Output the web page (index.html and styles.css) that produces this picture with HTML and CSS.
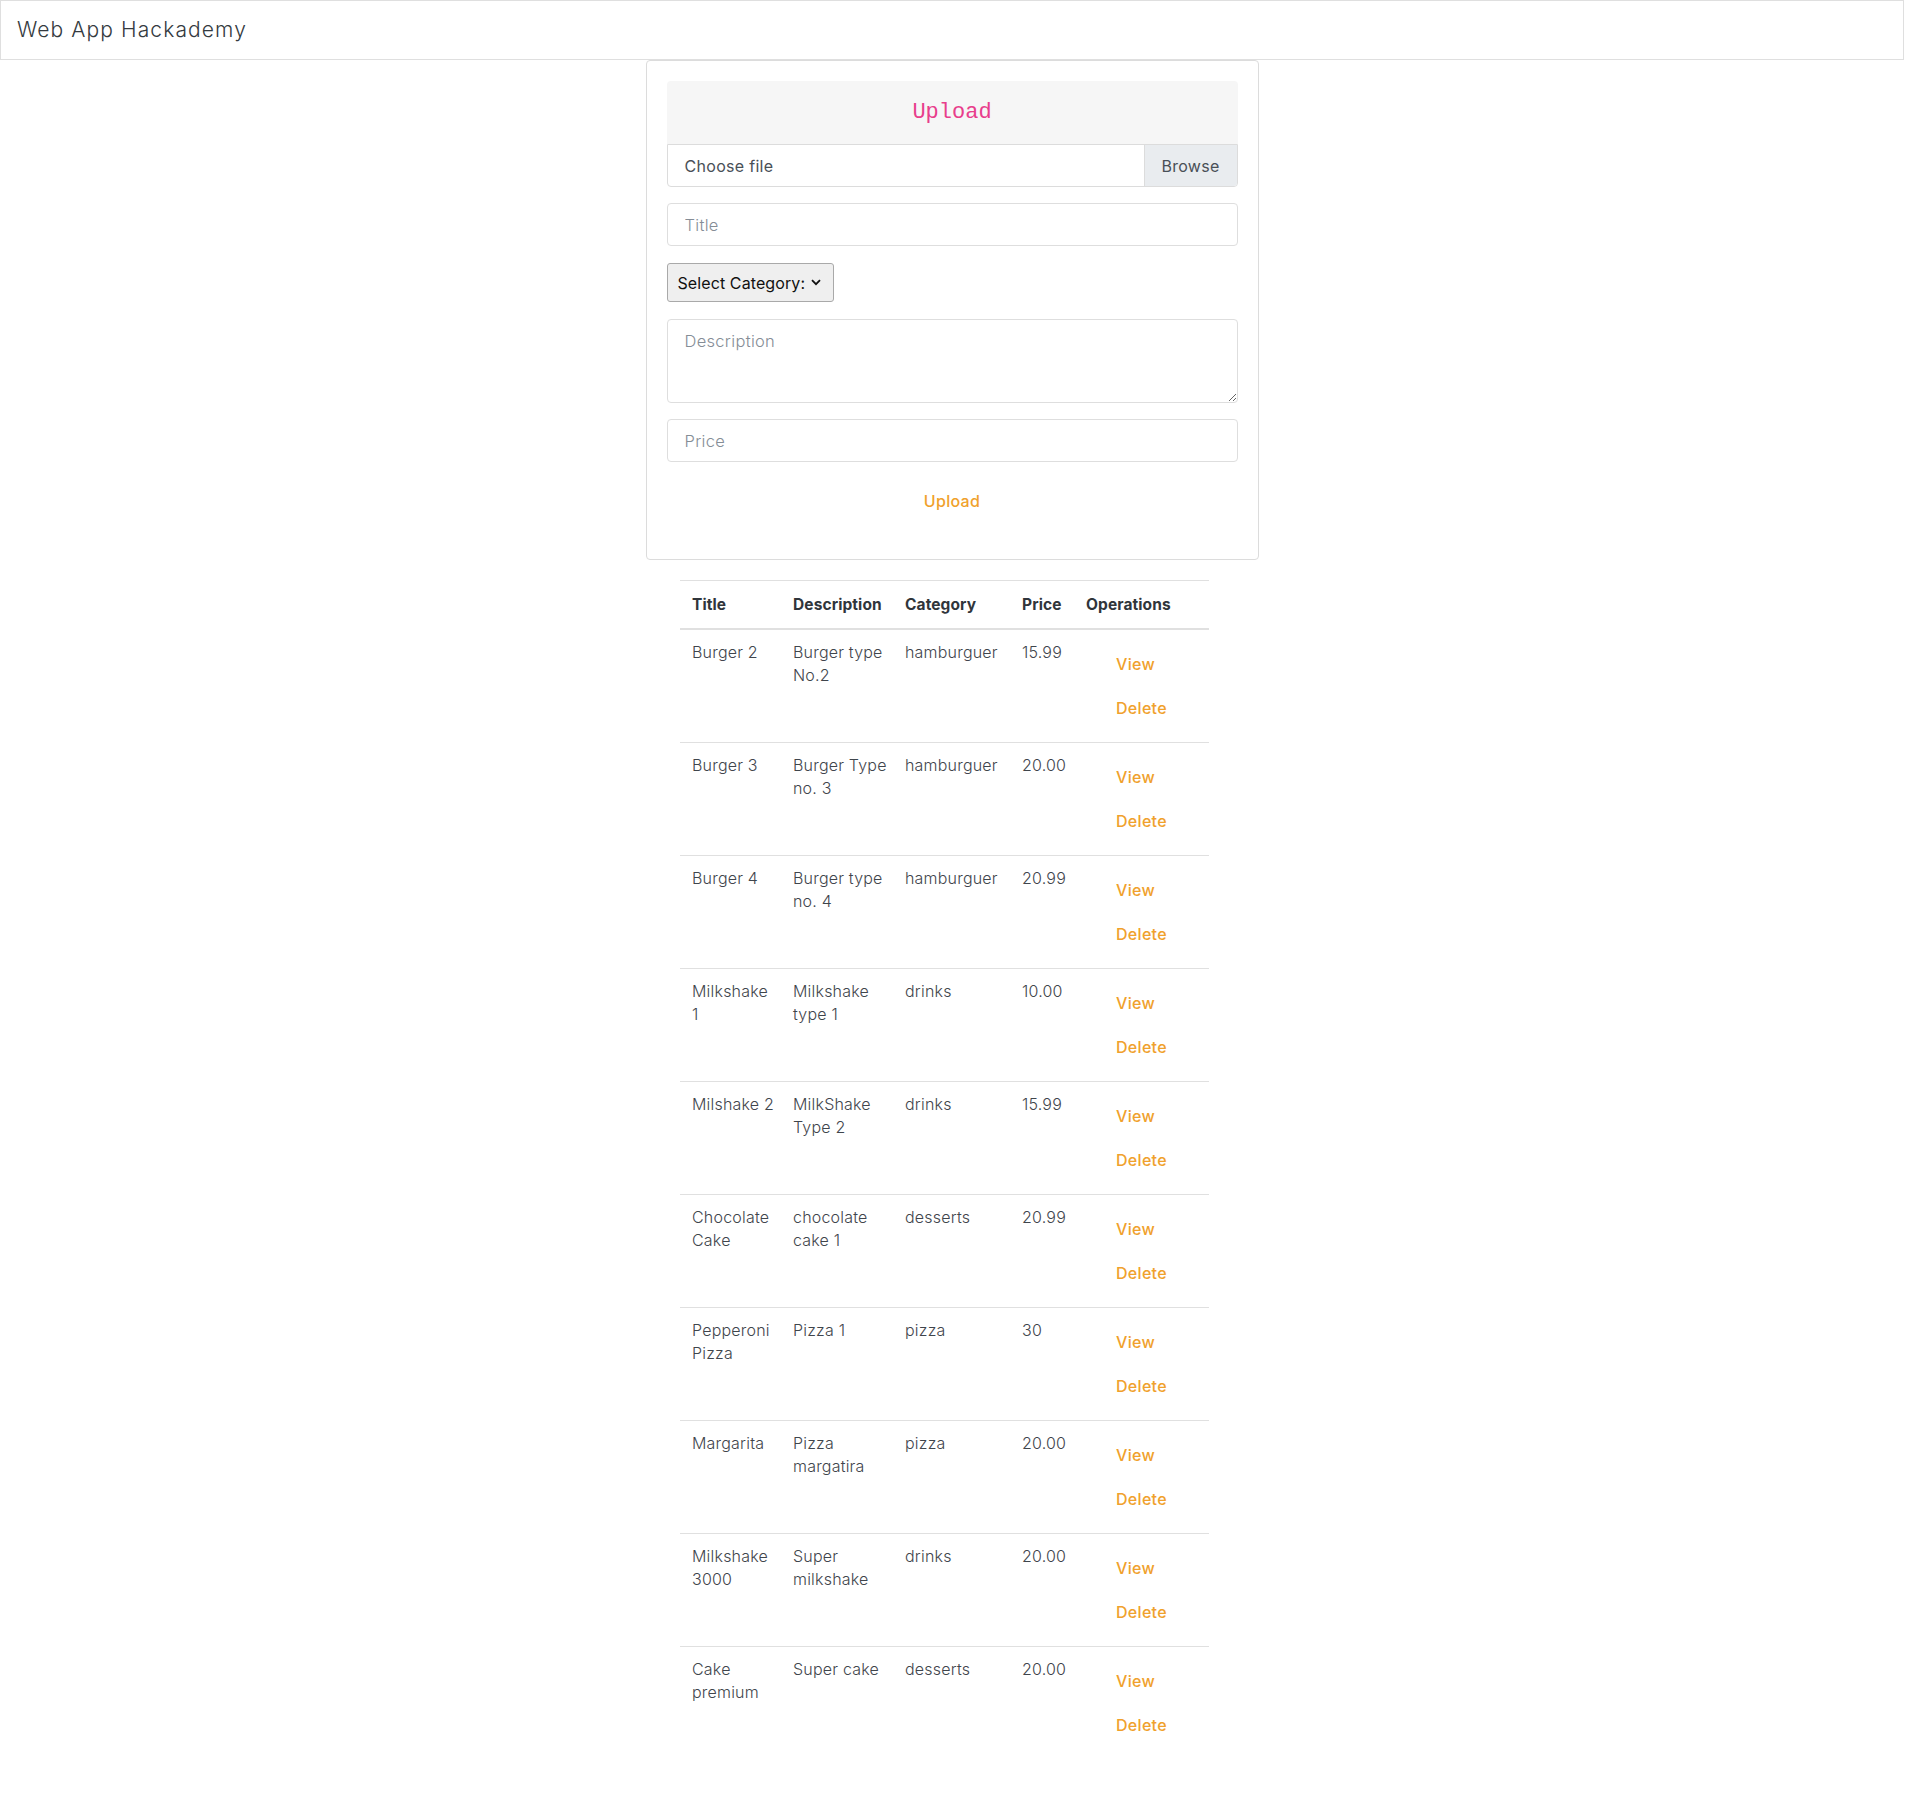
FILE: index.html
```html
<!DOCTYPE html>
<html lang="en">
<head>
<meta charset="utf-8">
<title>Web App Hackademy</title>
<link rel="stylesheet" href="styles.css">
</head>
<body>
<div class="page">
  <nav class="navbar"><span class="brand">Web App Hackademy</span></nav>
  <main class="main">
    <form class="card">
      <div class="card-head"><code class="head-title">Upload</code></div>
      <label class="file">
        <span class="file-label">Choose file</span>
        <span class="file-btn">Browse</span>
      </label>
      <input class="field" type="text" placeholder="Title">
      <div class="select-wrap">
        <select class="select"><option>Select Category:</option></select>
        <svg class="chev" width="10" height="7" viewBox="0 0 10 7"><path d="M1 1.2 L5 5.2 L9 1.2" fill="none" stroke="#111" stroke-width="1.8"/></svg>
      </div>
      <textarea class="field area" placeholder="Description"></textarea>
      <input class="field" type="text" placeholder="Price">
      <button class="link-btn" type="button">Upload</button>
    </form>

    <table class="items">
      <colgroup>
        <col class="c-title"><col class="c-desc"><col class="c-cat"><col class="c-price"><col class="c-ops">
      </colgroup>
      <thead>
        <tr><th>Title</th><th>Description</th><th>Category</th><th>Price</th><th>Operations</th></tr>
      </thead>
      <tbody>
        <tr><td>Burger 2</td><td><span class="nw">Burger type</span> No.2</td><td>hamburguer</td><td>15.99</td><td><a class="op" href="#">View</a><a class="op" href="#">Delete</a></td></tr>
        <tr><td>Burger 3</td><td><span class="nw">Burger Type</span> <span class="nw">no. 3</span></td><td>hamburguer</td><td>20.00</td><td><a class="op" href="#">View</a><a class="op" href="#">Delete</a></td></tr>
        <tr><td>Burger 4</td><td><span class="nw">Burger type</span> <span class="nw">no. 4</span></td><td>hamburguer</td><td>20.99</td><td><a class="op" href="#">View</a><a class="op" href="#">Delete</a></td></tr>
        <tr><td>Milkshake 1</td><td>Milkshake <span class="nw">type 1</span></td><td>drinks</td><td>10.00</td><td><a class="op" href="#">View</a><a class="op" href="#">Delete</a></td></tr>
        <tr><td><span class="nw">Milshake 2</span></td><td>MilkShake <span class="nw">Type 2</span></td><td>drinks</td><td>15.99</td><td><a class="op" href="#">View</a><a class="op" href="#">Delete</a></td></tr>
        <tr><td>Chocolate Cake</td><td>chocolate <span class="nw">cake 1</span></td><td>desserts</td><td>20.99</td><td><a class="op" href="#">View</a><a class="op" href="#">Delete</a></td></tr>
        <tr><td>Pepperoni Pizza</td><td><span class="nw">Pizza 1</span></td><td>pizza</td><td>30</td><td><a class="op" href="#">View</a><a class="op" href="#">Delete</a></td></tr>
        <tr><td>Margarita</td><td>Pizza margatira</td><td>pizza</td><td>20.00</td><td><a class="op" href="#">View</a><a class="op" href="#">Delete</a></td></tr>
        <tr><td>Milkshake 3000</td><td>Super milkshake</td><td>drinks</td><td>20.00</td><td><a class="op" href="#">View</a><a class="op" href="#">Delete</a></td></tr>
        <tr><td>Cake premium</td><td><span class="nw">Super cake</span></td><td>desserts</td><td>20.00</td><td><a class="op" href="#">View</a><a class="op" href="#">Delete</a></td></tr>
      </tbody>
    </table>
  </main>
</div>
</body>
</html>
```

FILE: styles.css
```css
* { box-sizing: border-box; }

html, body {
  margin: 0;
  padding: 0;
  background: #fff;
}

body {
  font-family: "Inter", "DejaVu Sans", sans-serif;
  font-size: 16px;
  line-height: 1.5;
  color: #212529;
}

.page {
  width: 1904px;
}

.navbar {
  height: 60px;
  border: 1px solid #dfdfdf;
  display: flex;
  align-items: center;
  padding: 0 16px;
}

.brand {
  font-size: 21px;
  font-weight: 300;
  color: #343a40;
  letter-spacing: 1.1px;
}

.main {
  display: flex;
  flex-direction: column;
  padding-bottom: 40px;
}

.card {
  width: 613px;
  margin: 0 auto;
  border: 1px solid #dcdcdc;
  border-radius: 4px;
  padding: 20px;
  display: flex;
  flex-direction: column;
  gap: 16px;
  margin-bottom: 20px;
}

.card-head {
  height: 63px;
  background: #f6f6f6;
  border-radius: 4px 4px 0 0;
  display: flex;
  align-items: center;
  justify-content: center;
  margin-bottom: -16px;
}

.head-title {
  font-family: "Liberation Mono", "DejaVu Sans Mono", monospace;
  font-size: 22px;
  color: #e83e8c;
}

.file {
  height: 43px;
  display: flex;
  border: 1px solid #dcdcdc;
  border-radius: 0 0 4px 4px;
  overflow: hidden;
  font-size: 16px;
  letter-spacing: 0.3px;
  color: #495057;
}

.file-label {
  flex: 1;
  display: flex;
  align-items: center;
  padding: 0 17px;
}

.file-btn {
  width: 93px;
  display: flex;
  align-items: center;
  justify-content: center;
  background: #e9ecef;
  border-left: 1px solid #dcdcdc;
}

.field {
  height: 43px;
  width: 100%;
  border: 1px solid #dedede;
  border-radius: 4px;
  padding: 0 17px;
  font-family: inherit;
  font-size: 16.5px;
  letter-spacing: 0.3px;
  color: #495057;
  background: #fff;
}

.field::placeholder {
  color: #858d96;
  font-weight: 300;
}

.area {
  height: 84px;
  padding: 9px 17px;
  line-height: 24px;
  resize: vertical;
  display: block;
}

.select-wrap {
  position: relative;
  width: 167px;
  height: 39px;
  margin: 1px 0;
}

.select {
  appearance: none;
  -webkit-appearance: none;
  width: 100%;
  height: 100%;
  border: 1px solid #a9a9a9;
  border-radius: 3px;
  background: #efefef;
  font-family: inherit;
  font-size: 16px;
  letter-spacing: 0.1px;
  color: #111;
  padding: 0 24px 0 10px;
}

.chev {
  position: absolute;
  right: 13px;
  top: 16px;
  pointer-events: none;
}

.link-btn {
  align-self: center;
  background: none;
  border: 1px solid transparent;
  padding: 6px 12px;
  font-family: inherit;
  font-size: 16px;
  line-height: 24px;
  font-weight: 500;
  letter-spacing: 0.3px;
  color: #f0a12c;
  margin: 4px 0 19px;
  cursor: pointer;
}

.items {
  width: 529px;
  margin-left: 680px;
  border-collapse: collapse;
  table-layout: fixed;
  font-size: 16px;
}

.c-title { width: 101px; }
.c-desc { width: 112px; }
.c-cat { width: 117px; }
.c-price { width: 64px; }
.c-ops { width: 135px; }

.items th,
.items td {
  padding: 11px 12px 13px;
  text-align: left;
  vertical-align: top;
  border-top: 1px solid #e0e0e0;
  line-height: 23px;
}

.items thead th {
  padding: 12px 12px 11px;
  border-bottom: 2px solid #e0e0e0;
  font-weight: 700;
  color: #30353b;
  font-size: 15.5px;
  letter-spacing: 0.1px;
  line-height: 24px;
}

.items tbody tr:first-child td {
  border-top: none;
}

.items td {
  font-weight: 300;
  color: #3f454c;
  letter-spacing: 0.2px;
}

.nw {
  white-space: nowrap;
}

.op {
  display: block;
  width: max-content;
  margin: 4px 0 6px 17px;
  padding: 6px 12px;
  line-height: 24px;
  border: 1px solid transparent;
  font-weight: 500;
  font-size: 16px;
  letter-spacing: 0.3px;
  color: #f0a12c;
  text-decoration: none;
}

.op + .op {
  margin-top: 0;
  margin-bottom: 2px;
}
```
